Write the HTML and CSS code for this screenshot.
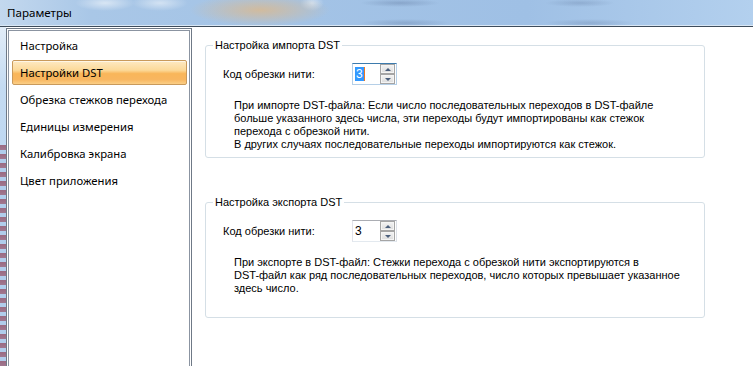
FILE: index.html
```html
<!DOCTYPE html>
<html lang="ru">
<head>
<meta charset="utf-8">
<title>Параметры</title>
<link rel="stylesheet" href="styles.css">
</head>
<body>
<div class="window">
  <div class="titlebar">
    <div class="aero"></div>
    <span class="title">Параметры</span>
  </div>
  <div class="client">
    <div class="frame-left"></div>
    <nav class="nav">
      <ul class="nav-list">
        <li class="nav-item">Настройка</li>
        <li class="nav-item selected">Настройки DST</li>
        <li class="nav-item">Обрезка стежков перехода</li>
        <li class="nav-item">Единицы измерения</li>
        <li class="nav-item">Калибровка экрана</li>
        <li class="nav-item">Цвет приложения</li>
      </ul>
    </nav>
    <main class="pane">
      <fieldset class="group group-import">
        <legend class="group-title">Настройка импорта DST</legend>
        <div class="field-row">
          <span class="label">Код обрезки нити:</span>
          <div class="spin focused">
            <span class="spin-value"><span class="sel">3</span><span class="caret"></span></span>
            <div class="spin-buttons">
              <span class="spin-btn"><span class="arrow up"></span></span>
              <span class="spin-btn"><span class="arrow down"></span></span>
            </div>
          </div>
        </div>
        <p class="note">При импорте DST-файла: Если число последовательных переходов в DST-файле<br>больше указанного здесь числа, эти переходы будут импортированы как стежок<br>перехода с обрезкой нити.<br>В других случаях последовательные переходы импортируются как стежок.</p>
      </fieldset>
      <fieldset class="group group-export">
        <legend class="group-title">Настройка экспорта DST</legend>
        <div class="field-row">
          <span class="label">Код обрезки нити:</span>
          <div class="spin">
            <span class="spin-value">3</span>
            <div class="spin-buttons">
              <span class="spin-btn"><span class="arrow up"></span></span>
              <span class="spin-btn"><span class="arrow down"></span></span>
            </div>
          </div>
        </div>
        <p class="note">При экспорте в DST-файл: Стежки перехода с обрезкой нити экспортируются в<br>DST-файл как ряд последовательных переходов, число которых превышает указанное<br>здесь число.</p>
      </fieldset>
    </main>
  </div>
</div>
</body>
</html>
```
FILE: styles.css
```css
html, body {
  margin: 0;
  padding: 0;
}
body {
  width: 753px;
  height: 366px;
  overflow: hidden;
  background: #fff;
  font-family: "Liberation Sans", Arial, sans-serif;
  color: #000;
}
.window {
  width: 753px;
  height: 366px;
  display: flex;
  flex-direction: column;
}
.titlebar {
  position: relative;
  height: 26px;
  flex: none;
  border-bottom: 1px solid #3e4c5b;
  box-shadow: inset 0 -1px 0 #d9e7f5;
  background: linear-gradient(to right, #c3d8ee 0, #a9c7e7 12%, #a3c3e6 40%, #9fc0e5 70%, #b3d0ee 100%);
  display: flex;
  align-items: center;
  padding-left: 7px;
  overflow: hidden;
}
.aero {
  position: absolute;
  inset: 0;
  background:
    radial-gradient(ellipse 30px 8px at 105px 3px, rgba(255,255,255,0.55), rgba(255,255,255,0) 100%),
    radial-gradient(ellipse 28px 8px at 160px 3px, rgba(255,255,255,0.5), rgba(255,255,255,0) 100%),
    radial-gradient(ellipse 70px 16px at 260px 10px, rgba(214,186,150,0.9), rgba(214,186,150,0) 100%),
    radial-gradient(ellipse 40px 4px at 400px 3px, rgba(60,80,120,0.25), rgba(60,80,120,0) 100%),
    radial-gradient(ellipse 45px 4px at 405px 23px, rgba(60,80,120,0.22), rgba(60,80,120,0) 100%),
    radial-gradient(ellipse 35px 4px at 580px 3px, rgba(60,80,120,0.2), rgba(60,80,120,0) 100%),
    radial-gradient(ellipse 45px 4px at 590px 23px, rgba(60,80,120,0.2), rgba(60,80,120,0) 100%),
    radial-gradient(ellipse 12px 8px at 312px 3px, rgba(255,255,255,0.5), rgba(255,255,255,0) 100%);
}
.title {
  position: relative;
  font-family: "Noto Sans", "Open Sans", sans-serif;
  font-size: 11.6px;
  color: #000;
  line-height: 16px;
}
.client {
  flex: 1;
  display: flex;
  min-height: 0;
}
.frame-left {
  width: 6px;
  flex: none;
  background:
    repeating-linear-gradient(to bottom, #9a6a82 0, #a07890 5px, #b0cdec 5px, #b0cdec 9px) 0 118px / 6px 100% no-repeat,
    linear-gradient(to bottom, #e2edf8 0, #c4dbf2 60px, #a9cbef 100%);
}
.nav {
  width: 186px;
  flex: none;
  box-sizing: border-box;
  margin-top: 1px;
  height: 350px;
  border: 1px solid #6f7986;
  padding: 1px;
  background: #fff;
}
.nav-list {
  list-style: none;
  margin: 0;
  height: 100%;
  box-sizing: border-box;
  border: 1px solid #8b94a1;
  padding: 2px 2px 0 3px;
  display: flex;
  flex-direction: column;
  gap: 2px;
}
.nav-item {
  height: 25px;
  box-sizing: border-box;
  border: 1px solid transparent;
  border-radius: 2px;
  padding-left: 7px;
  display: flex;
  align-items: center;
  font-family: "Noto Sans", "Open Sans", sans-serif;
  font-size: 11.3px;
  color: #000;
  white-space: nowrap;
}
.nav-item.selected {
  border-color: #c99a5c;
  background: linear-gradient(to bottom, #fee9c2 0, #fcd999 40%, #f9b65a 55%, #f8b660 80%, #fbcf86 100%);
  box-shadow: inset 0 1px 0 rgba(255,255,255,0.6);
}
.pane {
  flex: 1;
  padding-top: 11px;
  padding-left: 13px;
}
.group {
  width: 500px;
  box-sizing: border-box;
  margin: 0;
  border: 1px solid #d5dfe6;
  border-radius: 3px;
  padding: 0 0 6px 0;
  min-width: 0;
}
.group-export {
  margin-top: 37px;
  padding-bottom: 22px;
}
.group-title {
  margin-left: 7px;
  padding: 0 2px;
  font-size: 11px;
  line-height: 14px;
  color: #000;
}
.field-row {
  display: flex;
  align-items: center;
  margin-top: 11px;
  padding-left: 17px;
}
.label {
  width: 129px;
  flex: none;
  font-size: 11px;
  line-height: 14px;
}
.spin {
  width: 45px;
  height: 22px;
  box-sizing: border-box;
  border: 1px solid;
  border-color: #abadb3 #dbdfe6 #e3e9ef #e2e3ea;
  display: flex;
  align-items: center;
  background: #fff;
  position: relative;
}
.spin.focused {
  border-color: #3d7bad #b5cfe7 #b5cfe7 #b5cfe7;
}
.spin-value {
  flex: 1;
  padding-left: 2px;
  font-size: 12px;
  line-height: 14px;
  display: flex;
  align-items: center;
}
.sel {
  background: #3399ff;
  color: #fff;
  padding: 0 1px;
  line-height: 14px;
}
.caret {
  width: 1px;
  height: 14px;
  background: #f07820;
}
.spin-buttons {
  align-self: stretch;
  display: flex;
  flex-direction: column;
  margin-right: 1px;
}
.spin-btn {
  width: 15px;
  height: 10px;
  box-sizing: border-box;
  border: 1px solid #a5a5a5;
  box-shadow: inset 0 0 0 1px #f4f4f4;
  background: linear-gradient(to bottom, #f3f3f3, #dcdcdc);
  display: flex;
  align-items: center;
  justify-content: center;
}
.arrow {
  width: 0;
  height: 0;
  border-left: 3px solid transparent;
  border-right: 3px solid transparent;
}
.arrow.up {
  border-bottom: 3px solid #4b5f7c;
}
.arrow.down {
  border-top: 3px solid #4b5f7c;
}
.note {
  margin: 14px 0 0 28px;
  font-size: 11px;
  line-height: 13px;
  white-space: nowrap;
  color: #000;
}
```
